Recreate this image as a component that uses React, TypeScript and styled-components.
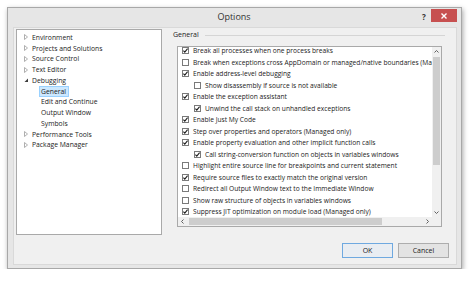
import React from 'react'
import styled, { createGlobalStyle } from 'styled-components'

type TreeItem = { label: string; depth: 0 | 1; state?: 'closed' | 'open'; selected?: boolean }

const tree: TreeItem[] = [
  { label: 'Environment', depth: 0, state: 'closed' },
  { label: 'Projects and Solutions', depth: 0, state: 'closed' },
  { label: 'Source Control', depth: 0, state: 'closed' },
  { label: 'Text Editor', depth: 0, state: 'closed' },
  { label: 'Debugging', depth: 0, state: 'open' },
  { label: 'General', depth: 1, selected: true },
  { label: 'Edit and Continue', depth: 1 },
  { label: 'Output Window', depth: 1 },
  { label: 'Symbols', depth: 1 },
  { label: 'Performance Tools', depth: 0, state: 'closed' },
  { label: 'Package Manager', depth: 0, state: 'closed' },
]

type Option = { label: string; checked: boolean; nested?: boolean }

const options: Option[] = [
  { label: 'Break all processes when one process breaks', checked: true },
  { label: 'Break when exceptions cross AppDomain or managed/native boundaries (Managed only)', checked: false },
  { label: 'Enable address-level debugging', checked: true },
  { label: 'Show disassembly if source is not available', checked: false, nested: true },
  { label: 'Enable the exception assistant', checked: true },
  { label: 'Unwind the call stack on unhandled exceptions', checked: true, nested: true },
  { label: 'Enable Just My Code', checked: true },
  { label: 'Step over properties and operators (Managed only)', checked: true },
  { label: 'Enable property evaluation and other implicit function calls', checked: true },
  { label: 'Call string-conversion function on objects in variables windows', checked: true, nested: true },
  { label: 'Highlight entire source line for breakpoints and current statement', checked: false },
  { label: 'Require source files to exactly match the original version', checked: true },
  { label: 'Redirect all Output Window text to the Immediate Window', checked: false },
  { label: 'Show raw structure of objects in variables windows', checked: false },
  { label: 'Suppress JIT optimization on module load (Managed only)', checked: true },
]

const Chevron: React.FC<{ dir: 'up' | 'down' | 'left' | 'right' }> = ({ dir }) => {
  const pts = {
    up: '0.5,3.5 2.5,1.5 4.5,3.5',
    down: '0.5,1.5 2.5,3.5 4.5,1.5',
    left: '3.5,0.5 1.5,2.5 3.5,4.5',
    right: '1.5,0.5 3.5,2.5 1.5,4.5',
  }[dir]
  return (
    <svg width="5" height="5" viewBox="0 0 5 5">
      <polyline points={pts} fill="none" stroke="#606060" strokeWidth="1" />
    </svg>
  )
}

const App: React.FC = () => {
  return (
    <>
      <GlobalStyle />
      <StyledWindow>
        <StyledTitleBar>
          <StyledTitle>Options</StyledTitle>
          <StyledHelp>?</StyledHelp>
          <StyledClose>
            <svg width="6" height="6" viewBox="0 0 6 6">
              <path d="M0.5 0.5L5.5 5.5M5.5 0.5L0.5 5.5" stroke="#fff" strokeWidth="1.4" />
            </svg>
          </StyledClose>
        </StyledTitleBar>

        <StyledBody>
          <StyledMain>
            <StyledTree>
              {tree.map((item) => (
                <StyledTreeRow key={item.label} depth={item.depth}>
                  {item.state === 'closed' && (
                    <svg width="4" height="6" viewBox="0 0 4 6">
                      <polygon points="0.5,0.5 3.5,3 0.5,5.5" fill="none" stroke="#a6a6a6" strokeWidth="0.9" />
                    </svg>
                  )}
                  {item.state === 'open' && (
                    <svg width="4" height="6" viewBox="0 0 4 6">
                      <polygon points="4,1.5 4,5 0.5,5" fill="#3c3c3c" />
                    </svg>
                  )}
                  <StyledTreeLabel selected={item.selected}>{item.label}</StyledTreeLabel>
                </StyledTreeRow>
              ))}
            </StyledTree>

            <StyledPage>
              <StyledGroupHead>
                <span>General</span>
                <StyledGroupLine />
              </StyledGroupHead>

              <StyledList>
                <StyledRows>
                  {options.map((o) => (
                    <StyledOption key={o.label} nested={o.nested}>
                      <StyledCheck>
                        {o.checked && (
                          <svg width="5" height="5" viewBox="0 0 5 5">
                            <polyline points="0.4,2.6 1.8,4.1 4.6,0.6" fill="none" stroke="#1e1e1e" strokeWidth="1.1" />
                          </svg>
                        )}
                      </StyledCheck>
                      <span>{o.label}</span>
                    </StyledOption>
                  ))}
                </StyledRows>

                <StyledVScroll>
                  <StyledArrow>
                    <Chevron dir="up" />
                  </StyledArrow>
                  <StyledVTrack>
                    <StyledVThumb />
                  </StyledVTrack>
                  <StyledArrow>
                    <Chevron dir="down" />
                  </StyledArrow>
                </StyledVScroll>

                <StyledHScroll>
                  <StyledArrow>
                    <Chevron dir="left" />
                  </StyledArrow>
                  <StyledHTrack>
                    <StyledHThumb />
                  </StyledHTrack>
                  <StyledArrow>
                    <Chevron dir="right" />
                  </StyledArrow>
                </StyledHScroll>

                <StyledCorner />
              </StyledList>
            </StyledPage>
          </StyledMain>

          <StyledFooter>
            <StyledButton primary>OK</StyledButton>
            <StyledButton>Cancel</StyledButton>
          </StyledFooter>
        </StyledBody>
      </StyledWindow>
    </>
  )
}

const GlobalStyle = createGlobalStyle`
  html, body {
    margin: 0;
    background: #fff;
  }
  body {
    font-family: "Open Sans", "Noto Sans", "Liberation Sans", sans-serif;
    color: #222;
  }
`

const StyledWindow = styled.div`
  margin: 7px 0 0 7px;
  width: 455px;
  height: 262px;
  box-sizing: border-box;
  background: #e6e6e6;
  border: 1px solid #a8a8a8;
  box-shadow: 1px 2px 5px rgba(0, 0, 0, 0.35);
  display: flex;
  flex-direction: column;
`

const StyledTitleBar = styled.div`
  height: 19px;
  display: flex;
  align-items: flex-start;
`

const StyledTitle = styled.div`
  flex: 1;
  text-align: center;
  font-size: 9px;
  line-height: 17px;
  color: #333;
  padding-left: 38px;
`

const StyledHelp = styled.div`
  font-size: 8px;
  font-weight: bold;
  line-height: 13px;
  margin-top: 2px;
  color: #333;
  width: 9px;
`

const StyledClose = styled.div`
  width: 26px;
  height: 13px;
  margin: 1px 4px 0 0;
  background: #c75050;
  display: flex;
  align-items: center;
  justify-content: center;
`

const StyledBody = styled.div`
  flex: 1;
  margin: 0 4px 3px 5px;
  background: #f0f0f0;
  border: 1px solid #d9d9d9;
  padding: 1px 7px 6px 2px;
  display: flex;
  flex-direction: column;
`

const StyledMain = styled.div`
  display: flex;
  height: 206px;
`

const StyledTree = styled.div`
  width: 146px;
  box-sizing: border-box;
  background: #fff;
  border: 1px solid #a9a9a9;
  padding-top: 2px;
  font-size: 6.8px;
`

const StyledTreeRow = styled.div<{ depth: number }>`
  height: 10.75px;
  display: flex;
  align-items: center;
  gap: 2px;
  padding-left: ${(p) => (p.depth ? 22 : 7)}px;
  white-space: nowrap;
`

const StyledTreeLabel = styled.span<{ selected?: boolean }>`
  padding: 0 2px 0 1px;
  line-height: 9px;
  border: 1px solid ${(p) => (p.selected ? '#99d1ff' : 'transparent')};
  background: ${(p) => (p.selected ? '#cce8ff' : 'transparent')};
`

const StyledPage = styled.div`
  flex: 1;
  margin-left: 8px;
  display: flex;
  flex-direction: column;
  min-width: 0;
`

const StyledGroupHead = styled.div`
  height: 17px;
  display: flex;
  align-items: flex-start;
  padding: 0 4px 0 3px;
  font-size: 7px;
  span {
    line-height: 12px;
  }
`

const StyledGroupLine = styled.div`
  flex: 1;
  height: 1px;
  background: #d5d5d5;
  margin: 6px 0 0 6px;
`

const StyledList = styled.div`
  margin: 0 7px 0 7px;
  height: 181px;
  box-sizing: border-box;
  background: #fff;
  border: 1px solid #a9a9a9;
  display: grid;
  grid-template-columns: 1fr 9px;
  grid-template-rows: 1fr 9px;
  overflow: hidden;
`

const StyledRows = styled.div`
  overflow: hidden;
  font-size: 6.65px;
  min-width: 0;
  > :first-child {
    margin-top: -2px;
  }
`

const StyledOption = styled.div<{ nested?: boolean }>`
  height: 11.5px;
  display: flex;
  align-items: center;
  gap: 4px;
  padding-left: ${(p) => (p.nested ? 16 : 4)}px;
  white-space: nowrap;
`

const StyledCheck = styled.div`
  width: 7px;
  height: 7px;
  flex: none;
  box-sizing: border-box;
  border: 1px solid #7a7a7a;
  background: #fff;
  display: flex;
  align-items: center;
  justify-content: center;
`

const StyledArrow = styled.div`
  width: 9px;
  height: 9px;
  flex: none;
  display: flex;
  align-items: center;
  justify-content: center;
`

const StyledVScroll = styled.div`
  background: #f0f0f0;
  display: flex;
  flex-direction: column;
`

const StyledVTrack = styled.div`
  flex: 1;
  padding: 1px 1px 0;
`

const StyledVThumb = styled.div`
  height: 108px;
  background: #cdcdcd;
`

const StyledHScroll = styled.div`
  background: #f0f0f0;
  display: flex;
`

const StyledHTrack = styled.div`
  flex: 1;
  padding: 1px 0 1px 2px;
`

const StyledHThumb = styled.div`
  width: 193px;
  height: 100%;
  background: #cdcdcd;
`

const StyledCorner = styled.div`
  background: #f0f0f0;
`

const StyledFooter = styled.div`
  margin-top: 8px;
  display: flex;
  justify-content: flex-end;
  gap: 5px;
`

const StyledButton = styled.button<{ primary?: boolean }>`
  width: 51px;
  height: 15px;
  padding: 0;
  font-family: inherit;
  font-size: 7px;
  color: #222;
  background: ${(p) => (p.primary ? '#e9edf2' : '#e3e3e3')};
  border: 1px solid ${(p) => (p.primary ? '#6fa9e0' : '#adadad')};
  outline: none;
`

export default App
